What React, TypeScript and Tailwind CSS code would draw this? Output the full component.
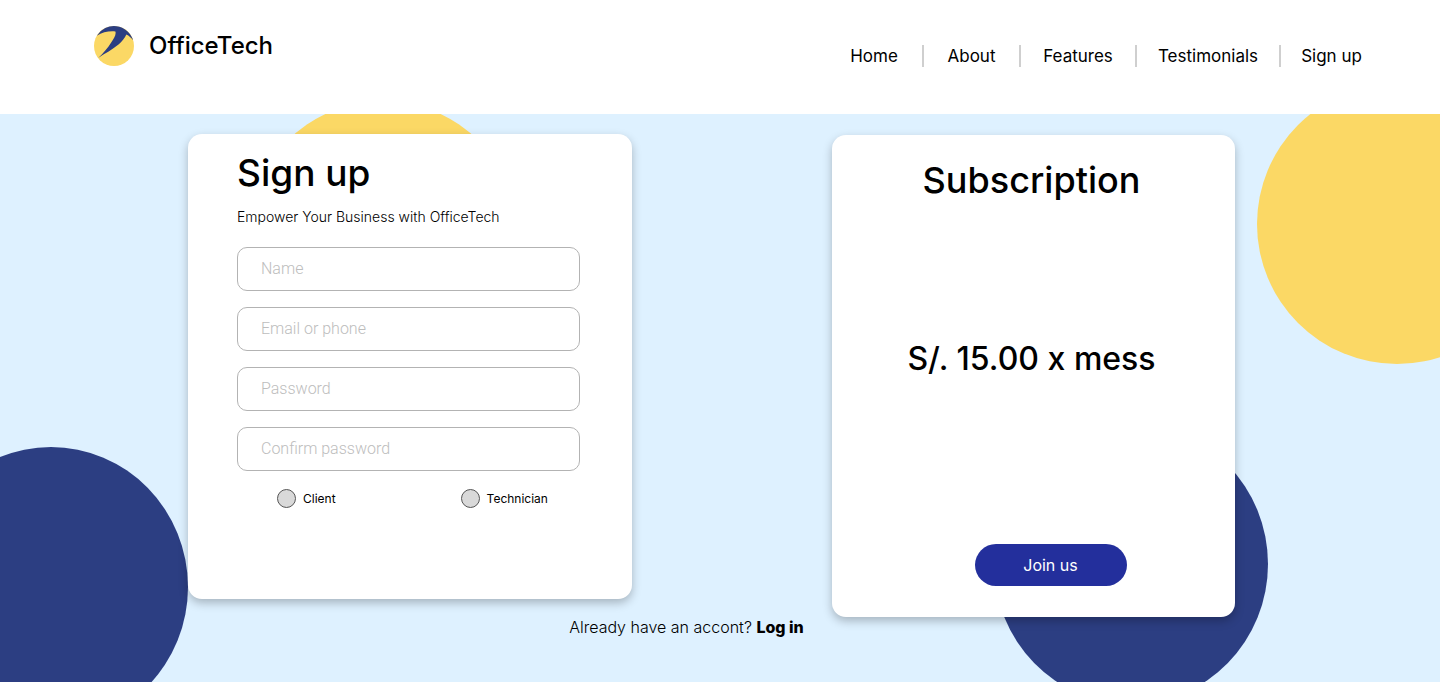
import React from "react";

const navLinks = [
  { label: "Home", width: "w-[98px]" },
  { label: "About", width: "w-[97px]" },
  { label: "Features", width: "w-[116px]" },
  { label: "Testimonials", width: "w-[144px]" },
  { label: "Sign up", width: "w-[101px]" },
];

const fields = [
  { id: "name", label: "Name", type: "text" },
  { id: "contact", label: "Email or phone", type: "text" },
  { id: "password", label: "Password", type: "password" },
  { id: "confirm", label: "Confirm password", type: "password" },
];

function Logo() {
  return (
    <svg viewBox="0 0 40 40" className="size-10" aria-hidden="true">
      <circle cx="20" cy="20" r="20" fill="#fbd865" />
      <path
        d="M2.8 9.8A20 20 0 0 1 39.2 14.6C37.2 11.8 35 9.8 32.4 8.6C30.6 12.4 28 15.6 24.5 18.6C18.5 23.6 11 27.5 4.2 32C9 27.4 13.8 22 17.5 16C19.8 12.3 22.4 9 21.4 5.4C15 4.8 8.5 6 2.8 9.8Z"
        fill="#2c3e82"
      />
    </svg>
  );
}

function Header() {
  return (
    <header className="flex h-[114px] items-start justify-between bg-white pr-[58px] pl-[94px]">
      <a href="#" className="mt-[26px] flex h-10 items-center gap-[15px] text-2xl font-medium">
        <Logo />
        OfficeTech
      </a>
      <nav className="mt-[45px]">
        <ul className="flex divide-x-2 divide-[#cfcfcf]">
          {navLinks.map((link) => (
            <li key={link.label} className={`${link.width} text-center text-[17px] leading-[22px]`}>
              <a href="#">{link.label}</a>
            </li>
          ))}
        </ul>
      </nav>
    </header>
  );
}

function Backdrop() {
  return (
    <div className="pointer-events-none absolute inset-0 overflow-hidden" aria-hidden="true">
      <div className="absolute -top-[13px] left-[246px] h-[280px] w-[274px] rounded-[50%] bg-[#fbd865]" />
      <div className="absolute -top-[30px] -right-[97px] size-[280px] rounded-full bg-[#fbd865]" />
      <div className="absolute top-[333px] -left-[86px] h-[280px] w-[274px] rounded-[50%] bg-[#2c3e82]" />
      <div className="absolute top-[310px] right-[172px] h-[280px] w-[274px] rounded-[50%] bg-[#2c3e82]" />
    </div>
  );
}

function SignUpForm() {
  return (
    <form className="h-[465px] w-[444px] rounded-[14px] bg-white pt-4 pr-[52px] pl-[49px] shadow-[0_4px_10px_rgba(0,0,0,0.25)]">
      <h1 className="text-[37px] leading-[46px] font-medium">Sign up</h1>
      <p className="mt-3 text-sm leading-[18px] font-light">Empower Your Business with OfficeTech</p>
      <div className="mt-[21px] flex flex-col gap-4">
        {fields.map((field) => (
          <input
            key={field.id}
            id={field.id}
            type={field.type}
            aria-label={field.label}
            placeholder={field.label}
            className="h-11 w-full rounded-[10px] border border-[#b3b3b3] px-[23px] pb-0.5 font-['Roboto'] text-base font-light placeholder:text-[#bdbdbd]"
          />
        ))}
      </div>
      <div className="mt-[18px] flex gap-[125px] pl-10 text-xs leading-[19px]">
        {["Client", "Technician"].map((role) => (
          <label key={role} className="flex items-center gap-[7px]">
            <input
              type="radio"
              name="role"
              value={role}
              className="size-[19px] appearance-none rounded-full border border-[#555] bg-[#d9d9d9] checked:bg-[#232f9c]"
            />
            {role}
          </label>
        ))}
      </div>
    </form>
  );
}

function SubscriptionCard() {
  return (
    <section className="mt-px flex h-[482px] w-[403px] flex-col items-center rounded-[14px] bg-white pt-[22px] pb-[31px] shadow-[0_4px_10px_rgba(0,0,0,0.25)]">
      <h2 className="pr-1 text-4xl leading-[46px] font-medium">Subscription</h2>
      <p className="mt-[136px] pr-1 text-[32px] leading-10 font-medium">S/. 15.00 x mess</p>
      <button type="button" className="mt-auto ml-[34px] h-[42px] w-[152px] rounded-full bg-[#232f9c] text-base text-white">
        Join us
      </button>
    </section>
  );
}

export default function App() {
  return (
    <div className="flex min-h-screen flex-col bg-[#def1ff] font-['Inter','Liberation_Sans',sans-serif] text-black">
      <Header />
      <main className="relative flex-1">
        <Backdrop />
        <div className="relative flex items-start justify-between pt-5 pr-[205px] pl-[188px]">
          <SignUpForm />
          <SubscriptionCard />
        </div>
        <p className="relative pr-[67px] text-center text-base leading-5 font-light">
          Already have an accont?{" "}
          <a href="#" className="font-extrabold">
            Log in
          </a>
        </p>
      </main>
    </div>
  );
}
